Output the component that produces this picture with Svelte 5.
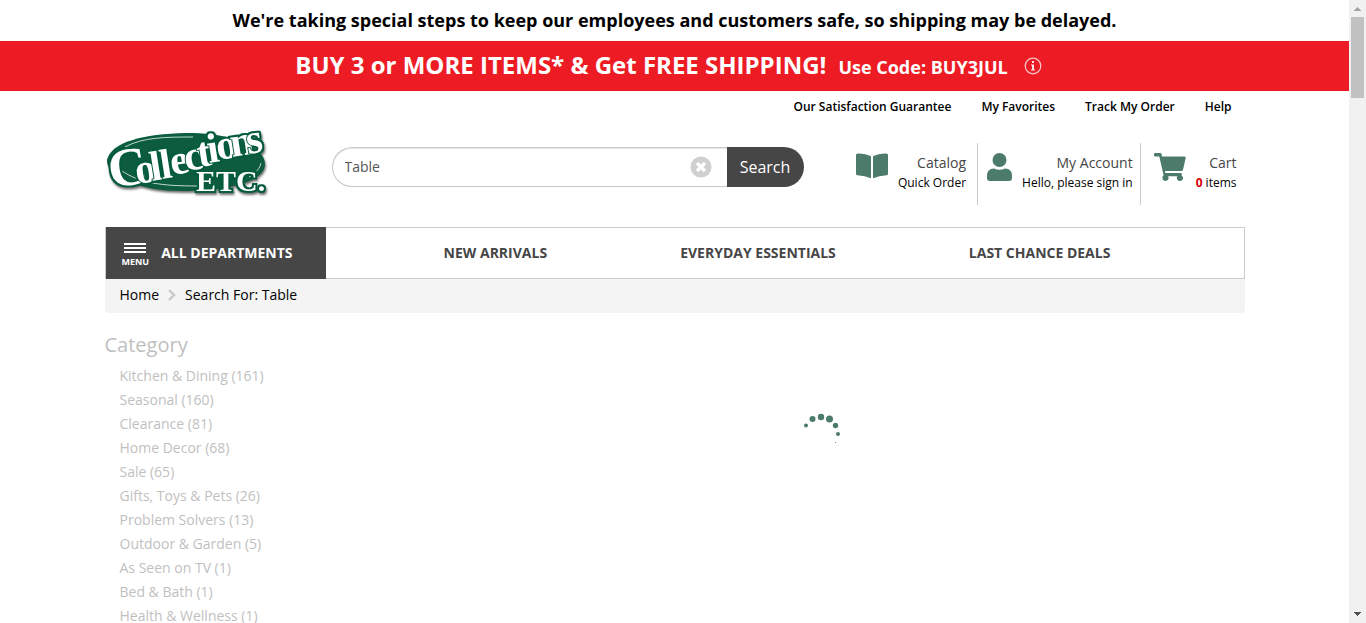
<script>
  const utility = ['Our Satisfaction Guarantee', 'My Favorites', 'Track My Order', 'Help'];
  const departments = ['NEW ARRIVALS', 'EVERYDAY ESSENTIALS', 'LAST CHANCE DEALS'];
  const categories = [
    ['Kitchen & Dining', 161],
    ['Seasonal', 160],
    ['Clearance', 81],
    ['Home Decor', 68],
    ['Sale', 65],
    ['Gifts, Toys & Pets', 26],
    ['Problem Solvers', 13],
    ['Outdoor & Garden', 5],
    ['As Seen on TV', 1],
    ['Bed & Bath', 1],
    ['Health & Wellness', 1]
  ];
  let query = $state('Table');
</script>

<div class="shell">
  <div class="page">
    <div class="notice">We're taking special steps to keep our employees and customers safe, so shipping may be delayed.</div>
    <div class="promo">
      <span class="offer">BUY 3 or MORE ITEMS* &amp; Get FREE SHIPPING!</span>
      <span class="code">Use Code: BUY3JUL</span>
      <button class="info" aria-label="Offer details">
        <svg viewBox="0 0 18 18" width="18" height="18"><circle cx="9" cy="9" r="7.8" fill="none" stroke="#fbc8ca" stroke-width="1.2" /><path d="M8 4h2v2H8zM7 7.500h3v5h1v1H7v-1h1v-4H7z" fill="#fde4e5" /></svg>
      </button>
    </div>

    <div class="container">
      <header>
        <nav class="utility" aria-label="Customer service">
          {#each utility as item}<a href="#top">{item}</a>{/each}
        </nav>
        <div class="masthead">
          <a class="logo" href="#top" aria-label="Collections Etc.">
            <svg viewBox="0 0 164 80" width="164" height="80">
              <defs>
                <filter id="shade" x="-10%" y="-10%" width="120%" height="130%"><feDropShadow dx="1" dy="2" stdDeviation="1.2" flood-color="#222" flood-opacity=".65" /></filter>
                <filter id="outline" x="-10%" y="-10%" width="120%" height="120%" color-interpolation-filters="sRGB">
                  <feMorphology in="SourceAlpha" operator="dilate" radius="1" result="wide" />
                  <feFlood flood-color="#075b3c" />
                  <feComposite in2="wide" operator="in" />
                  <feMerge><feMergeNode /><feMergeNode in="SourceGraphic" /></feMerge>
                </filter>
              </defs>
              <g filter="url(#shade)">
                <path d="M2 41C6 23 38 15 82 14c42 0 77 12 78 31 0 18-38 27-83 27C35 72 1 58 2 41z" fill="#075b3c" />
                <path d="M20 28C38 18 62 18 88 18M17 52c18 12 39 15 76 15m51-9c7-4 11-9 12-14" fill="none" stroke="#c5dacf" stroke-width="1" />
                <g class="letters" filter="url(#outline)">
                  <text class="word" x="6 32 47 57 67 81 94 104 113 127 143" y="69 65 62 60 56 52 48 44 41 38 35" rotate="-9"><tspan class="big">C</tspan>ollections</text>
                  <text class="etc" x="91" y="72">ETC.</text>
                </g>
              </g>
            </svg>
          </a>
          <form class="search" onsubmit={(e) => e.preventDefault()}>
            <div class="field">
              <input type="text" aria-label="Search products" bind:value={query} />
              <button type="button" class="clear" aria-label="Clear search" onclick={() => (query = '')}>
                <svg viewBox="0 0 22 22" width="22" height="22"><circle cx="11" cy="11" r="10.5" fill="#d1cfcf" /><path d="M7 7l8 8m0-8l-8 8" stroke="#fff" stroke-width="3.400" /></svg>
              </button>
            </div>
            <button class="submit">Search</button>
          </form>
          <nav class="account" aria-label="Account">
            <a href="#top" class="catalog">
              <svg viewBox="0 0 32 26" width="32" height="26" fill="#4c7b6c"><path d="M0 2Q0 .4 2 .5 10 .8 15 3.2V25.3Q9 22.7 1.5 22.3 0 22.2 0 20.7zM32 2Q32 .4 30 .5 22 .8 17 3.2V25.3Q23 22.7 30.5 22.3 32 22.2 32 20.7z" /></svg>
              <span class="label"><span class="title">Catalog</span><span>Quick Order</span></span>
            </a>
            <a href="#top" class="user">
              <svg viewBox="0 0 25 28" width="25" height="28" fill="#4c7b6c"><circle cx="12.5" cy="7" r="7" /><path d="M7 15.5q5.500 2.500 11 0Q25 15.500 25 23v2q0 3-3 3H3q-3 0-3-3v-2q0-7.500 7-7.500z" /></svg>
              <span class="label"><span class="title">My Account</span><span>Hello, please sign in</span></span>
            </a>
            <a href="#top" class="cart">
              <svg viewBox="0 0 32 28" width="32" height="28" fill="#4c7b6c"><path d="M1.300 0H6q1.300 0 1.600 1.300L8 3.500H30.400q1.600 0 1.300 1.600L29 16.700q-.3 1.200-1.500 1.200H11l.4 2.100h15.200q1.500 0 1.300 1.500l-.3 1.300q2 1 1.400 3.200-.8 2-3 2-3.200-.3-3.200-3.300 0-.8.6-1.500H14q.8.900.7 2-.5 2.700-3 2.800-3.300-.3-3.300-3.200 0-1.600 1.200-2.500L5.300 3.500h-4Q0 3.500 0 2.200V1.300Q0 0 1.300 0z" /></svg>
              <span class="label"><span class="title">Cart</span><span><b>0</b> items</span></span>
            </a>
          </nav>
        </div>
      </header>

      <nav class="departments" aria-label="Departments">
        <button class="all">
          <span class="menu"><svg viewBox="0 0 22 11" width="22" height="11" fill="#fff"><path d="M0 0h22v2H0zM0 4h22v2H0zM0 8h22v2H0z" /></svg>MENU</span>
          <span>ALL DEPARTMENTS</span>
        </button>
        <div class="links">
          {#each departments as item}<a href="#top">{item}</a>{/each}
        </div>
      </nav>
      <nav class="crumbs" aria-label="Breadcrumb">
        <a href="#top">Home</a>
        <svg viewBox="0 0 8 12" width="8" height="12"><path d="M1 1l5 5-5 5" fill="none" stroke="#c8c8c8" stroke-width="2.400" /></svg>
        <span>Search For: Table</span>
      </nav>

      <div class="content">
        <aside>
          <h2>Category</h2>
          <ul>
            {#each categories as [name, count]}<li><a href="#top">{name} ({count})</a></li>{/each}
          </ul>
        </aside>
        <main aria-busy="true">
          <svg viewBox="0 0 38 38" width="38" height="38" fill="#4c7b6c" role="img" aria-label="Loading">
            <circle cx="3" cy="12.500" r="2" /><circle cx="9.500" cy="6" r="3" /><circle cx="18" cy="4" r="3.200" /><circle cx="26.500" cy="6" r="3.500" /><circle cx="32.500" cy="12.500" r="2.700" /><circle cx="35" cy="21" r="2" /><circle cx="32.500" cy="29.500" r=".6" />
          </svg>
        </main>
      </div>
    </div>
  </div>
  <div class="scrollbar" aria-hidden="true">
    <svg viewBox="0 0 17 17" width="17" height="17"><path d="M8 7h1v1h1v1h1v1h1v1H5v-1h1V9h1V8h1z" fill="#a3a3a3" /></svg>
    <div class="thumb"></div>
    <svg viewBox="0 0 17 17" width="17" height="17"><path d="M5 6h7v1h-1v1h-1v1H9v1H8V9H7V8H6V7H5z" fill="#505050" /></svg>
  </div>
</div>

<style>
  :global(body) { margin: 0; background: #fff; }
  .shell { display: grid; grid-template-columns: minmax(0, 1fr) 17px; height: 100vh; overflow: hidden; font: 14px/24px "Open Sans", sans-serif; color: #000; }
  .shell * { box-sizing: border-box; }
  .page { overflow: hidden; }
  a { color: inherit; text-decoration: none; }
  button { font: inherit; border: 0; padding: 0; cursor: pointer; }
  svg { display: block; flex: none; }
  .notice { padding: 8px 16px 9px; font-size: 18px; font-weight: 700; text-align: center; }
  .promo { display: flex; align-items: baseline; justify-content: center; padding: 8px 12px 8px 0; background: #ed1c24; color: #fff; font-weight: 700; line-height: 32px; }
  .offer { font-size: 24px; }
  .code { margin-left: 12px; font-size: 18px; }
  .info { align-self: center; margin-left: 16px; background: none; }
  .container { max-width: 1140px; margin: 0 auto; }
  .utility { display: flex; justify-content: flex-end; gap: 30px; padding: 4px 13px 0 0; font-size: 12px; font-weight: 600; }
  .masthead { display: flex; align-items: flex-start; height: 108px; }
  .logo { margin: 0 63px 0 0; }
  .logo svg { overflow: visible; }
  .letters { font-family: "Liberation Serif", serif; font-weight: 700; fill: #fff; stroke: #075b3c; stroke-width: 2; paint-order: stroke; }
  .big { font-size: 54px; }
  .word { font-size: 42px; }
  .etc { font-size: 30px; }
  .search { display: flex; width: 472px; height: 40px; margin-top: 28px; }
  .field { display: flex; flex: 1; align-items: center; padding-right: 15px; border: 1px solid #c8c8c8; border-right: 0; border-radius: 20px 0 0 20px; box-shadow: inset 0 1px 1px #e8e8e8; }
  input { flex: 1; min-width: 0; padding: 0 12px; border: 0; outline: 0; background: none; font: inherit; color: #555; }
  .clear { background: none; }
  .submit { width: 77px; border-radius: 0 20px 20px 0; background: #464646; color: #fff; font-size: 16px; }
  .account { display: flex; margin: 24px 0 0 auto; font-size: 12px; line-height: 20px; }
  .account a { display: flex; height: 62px; padding: 10px 7px 0 9px; border-left: 1px solid #ccc; }
  .account .catalog { border: 0; padding-right: 11px; }
  .account .cart { padding-left: 13px; padding-right: 8px; }
  .label { display: flex; flex-direction: column; margin-left: 10px; text-align: right; }
  .title { font-size: 14px; font-weight: 400; color: #464646; }
  .label b { color: #d9000d; }
  .departments { display: flex; height: 52px; border: 1px solid #ccc; color: #464646; font-weight: 700; }
  .all { display: flex; align-items: center; gap: 12px; width: 220px; margin: -1px 0; padding-left: 16px; background: #464646; color: #fff; font-weight: 700; }
  .menu { display: flex; flex-direction: column; align-items: center; gap: 2px; padding-top: 4px; font-size: 9px; line-height: 12px; }
  .links { display: flex; flex: 1; align-items: center; justify-content: center; gap: 133px; padding-right: 15px; }
  .crumbs { display: flex; align-items: center; gap: 9px; padding: 4px 15px 6px; border-radius: 0 0 4px 4px; background: #f4f4f4; }
  .content { display: grid; grid-template-columns: 295px 1fr; padding-top: 18px; }
  h2 { margin: 0 0 5px; color: #bfbfbf; font-size: 20px; font-weight: 400; line-height: 28px; }
  ul { margin: 0; padding: 0 0 0 15px; list-style: none; color: #bfbfbf; }
  main { display: flex; justify-content: center; padding-top: 82px; }
  .scrollbar { display: flex; flex-direction: column; background: #f1f1f1; }
  .thumb { height: 81px; margin: 0 2px; background: #c1c1c1; }
  .scrollbar svg:last-child { margin-top: auto; }
</style>
